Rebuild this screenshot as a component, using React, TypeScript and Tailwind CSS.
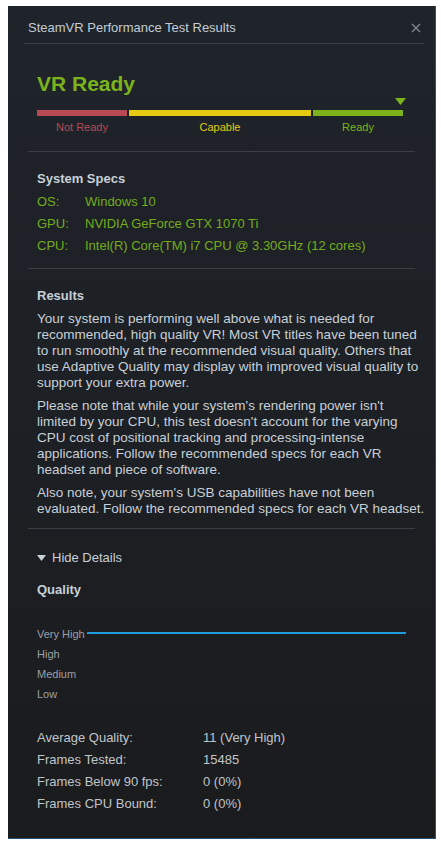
const font = "font-['Liberation_Sans',Arial,sans-serif]"

const specs = [
  { label: 'OS:', value: 'Windows 10' },
  { label: 'GPU:', value: 'NVIDIA GeForce GTX 1070 Ti' },
  { label: 'CPU:', value: 'Intel(R) Core(TM) i7 CPU @ 3.30GHz (12 cores)' }
]

const stats = [
  { label: 'Average Quality:', value: '11 (Very High)' },
  { label: 'Frames Tested:', value: '15485' },
  { label: 'Frames Below 90 fps:', value: '0 (0%)' },
  { label: 'Frames CPU Bound:', value: '0 (0%)' }
]

// lines broken where the dialog breaks them
const results = [
  [
    'Your system is performing well above what is needed for',
    'recommended, high quality VR! Most VR titles have been tuned',
    'to run smoothly at the recommended visual quality. Others that',
    'use Adaptive Quality may display with improved visual quality to',
    'support your extra power.'
  ],
  [
    "Please note that while your system's rendering power isn't",
    "limited by your CPU, this test doesn't account for the varying",
    'CPU cost of positional tracking and processing-intense',
    'applications. Follow the recommended specs for each VR',
    'headset and piece of software.'
  ],
  [
    "Also note, your system's USB capabilities have not been",
    'evaluated. Follow the recommended specs for each VR headset.'
  ]
]

const Divider = () => <div className="h-px bg-[#3b3f45]" />

const ReadyBar = () => (
  <div>
    <div className="flex h-[8px] justify-end">
      <svg width="11" height="8" viewBox="0 0 11 8" className="mr-[-3px]">
        <polygon points="0,0 11,0 5.5,7" fill="#7cb31d" />
      </svg>
    </div>
    <div className="mt-[4px] flex gap-[2px]">
      <div className="flex w-[90px] flex-col items-center">
        <div className="h-[6px] w-full bg-[#b94a54]" />
        <span className="mt-[4px] text-[11px] leading-[14px] text-[#b94a54]">Not Ready</span>
      </div>
      <div className="flex flex-1 flex-col items-center">
        <div className="h-[6px] w-full bg-[#e4cb12]" />
        <span className="mt-[4px] text-[11px] leading-[14px] text-[#e4cb12]">Capable</span>
      </div>
      <div className="flex w-[90px] flex-col items-center">
        <div className="h-[6px] w-full bg-[#7cb31d]" />
        <span className="mt-[4px] text-[11px] leading-[14px] text-[#7cb31d]">Ready</span>
      </div>
    </div>
  </div>
)

export default function App() {
  return (
    <div className={`min-h-screen bg-white pl-[8px] pt-[6px] ${font}`}>
      <div className="flex h-[833px] w-[428px] flex-col border-r border-b border-[#24557a] bg-gradient-to-b from-[#1f242b] to-[#1a1b1d]">
        {/* header */}
        <div className="ml-[16px] mr-[11px] flex h-[38px] items-center justify-between border-b border-[#3b3f45] pl-[4px] pr-[3px] pt-[6px]">
          <span className="text-[13px] text-[#c3ccd5]">SteamVR Performance Test Results</span>
          <svg width="10" height="10" viewBox="0 0 10 10">
            <path d="M1 1L9 9M9 1L1 9" stroke="#80868d" strokeWidth="1.4" />
          </svg>
        </div>

        <div className="flex flex-col px-[20px]">
          {/* verdict */}
          <div className="pb-[17px] pl-[9px] pr-[12px] pt-[26px]">
            <h1 className="text-[21px] font-bold leading-[28px] text-[#7cb31d]">VR Ready</h1>
            <ReadyBar />
          </div>
          <Divider />

          {/* specs */}
          <div className="pb-[11px] pl-[9px] pr-[12px] pt-[19px]">
            <h2 className="text-[13px] font-bold leading-[16px] text-[#c8d0d8]">System Specs</h2>
            <div className="mt-[4px] flex flex-col">
              {specs.map((s) => (
                <div key={s.label} className="flex h-[22px] items-center text-[13px] text-[#74ac1c]">
                  <span className="w-[48px]">{s.label}</span>
                  <span>{s.value}</span>
                </div>
              ))}
            </div>
          </div>
          <Divider />

          {/* results */}
          <div className="pb-[11px] pl-[9px] pr-[4px] pt-[19px] leading-[16px] text-[#c8d0d8]">
            <h2 className="text-[13px] font-bold">Results</h2>
            {results.map((para, i) => (
              <p key={i} className="mt-[7px] text-[13.5px]">
                {para.map((line) => (
                  <span key={line} className="block whitespace-nowrap">
                    {line}
                  </span>
                ))}
              </p>
            ))}
          </div>
          <Divider />

          {/* details */}
          <div className="pl-[9px] pr-[12px] pt-[21px]">
            <button className="flex items-center gap-[6px] text-[13px] leading-[16px] text-[#c8d0d8]">
              <svg width="9" height="6" viewBox="0 0 9 6">
                <polygon points="0,0 9,0 4.5,6" fill="#c8d0d8" />
              </svg>
              Hide Details
            </button>
            <h2 className="mt-[16px] text-[13px] font-bold leading-[16px] text-[#c8d0d8]">Quality</h2>

            <div className="mt-[26px] flex flex-col text-[11px] text-[#9ba0a6]">
              <div className="flex h-[20px] items-center gap-[2px]">
                <span>Very High</span>
                <div className="mb-[3px] mr-[-3px] h-[2px] flex-1 bg-[#1f9be0]" />
              </div>
              <div className="flex h-[20px] items-center">High</div>
              <div className="flex h-[20px] items-center">Medium</div>
              <div className="flex h-[20px] items-center">Low</div>
            </div>

            <div className="mt-[23px] flex flex-col text-[13px] text-[#c0c5ca]">
              {stats.map((s) => (
                <div key={s.label} className="flex h-[22px] items-center">
                  <span className="w-[166px]">{s.label}</span>
                  <span>{s.value}</span>
                </div>
              ))}
            </div>
          </div>
        </div>
      </div>
    </div>
  )
}
